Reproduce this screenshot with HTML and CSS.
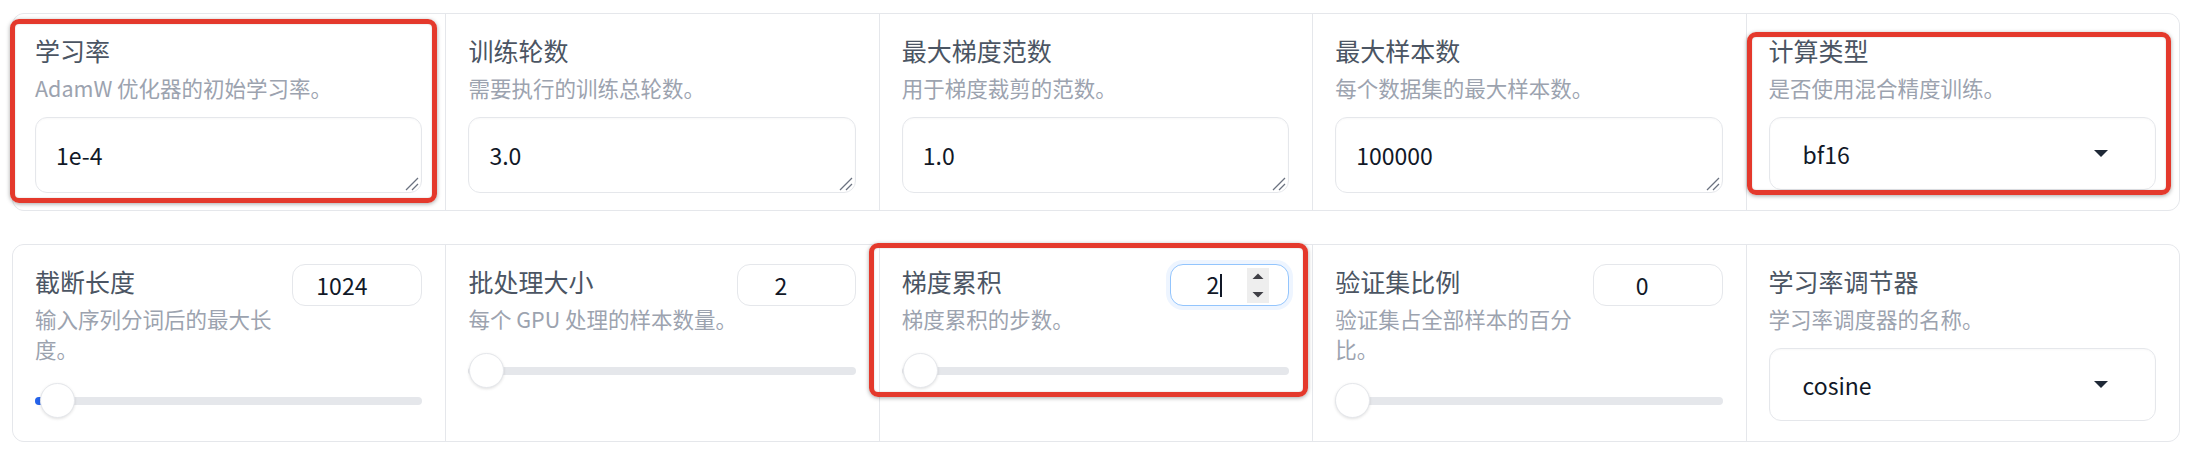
FILE: index.html
```html
<!DOCTYPE html>
<html lang="zh-CN">
<head>
<meta charset="utf-8">
<title>训练参数</title>
<link rel="stylesheet" href="styles.css">
</head>
<body>
<div class="page">
  <section class="panel">
    <div class="cell">
      <div class="label">学习率</div>
      <div class="info">AdamW 优化器的初始学习率。</div>
      <div class="textbox"><span>1e-4</span><svg class="grip" viewBox="0 0 16 16"><path d="M15 3 L3 15 M15 9 L9 15"/></svg></div>
    </div>
    <div class="cell">
      <div class="label">训练轮数</div>
      <div class="info">需要执行的训练总轮数。</div>
      <div class="textbox"><span>3.0</span><svg class="grip" viewBox="0 0 16 16"><path d="M15 3 L3 15 M15 9 L9 15"/></svg></div>
    </div>
    <div class="cell">
      <div class="label">最大梯度范数</div>
      <div class="info">用于梯度裁剪的范数。</div>
      <div class="textbox"><span>1.0</span><svg class="grip" viewBox="0 0 16 16"><path d="M15 3 L3 15 M15 9 L9 15"/></svg></div>
    </div>
    <div class="cell">
      <div class="label">最大样本数</div>
      <div class="info">每个数据集的最大样本数。</div>
      <div class="textbox"><span>100000</span><svg class="grip" viewBox="0 0 16 16"><path d="M15 3 L3 15 M15 9 L9 15"/></svg></div>
    </div>
    <div class="cell">
      <div class="label">计算类型</div>
      <div class="info">是否使用混合精度训练。</div>
      <div class="select"><span>bf16</span><svg class="arrow" viewBox="0 0 14 7"><polygon points="0,0 14,0 7,7"/></svg></div>
    </div>
  </section>

  <section class="panel">
    <div class="cell">
      <div class="head">
        <div class="meta">
          <div class="label">截断长度</div>
          <div class="info">输入序列分词后的最大长度。</div>
        </div>
        <div class="num"><span class="val">1024</span><span class="spin"></span></div>
      </div>
      <div class="slider"><div class="track"><div class="fill" style="width:22px"></div></div><div class="thumb" style="left:5px"></div></div>
    </div>
    <div class="cell">
      <div class="head">
        <div class="meta">
          <div class="label">批处理大小</div>
          <div class="info nowrap">每个 GPU 处理的样本数量。</div>
        </div>
        <div class="num narrow"><span class="val">2</span><span class="spin"></span></div>
      </div>
      <div class="slider"><div class="track"></div><div class="thumb" style="left:1px"></div></div>
    </div>
    <div class="cell">
      <div class="head">
        <div class="meta">
          <div class="label">梯度累积</div>
          <div class="info">梯度累积的步数。</div>
        </div>
        <div class="num narrow focus"><span class="val">2<span class="caret"></span></span><span class="spin"><svg viewBox="0 0 22 35"><polygon points="5.5,11 16.5,11 11,5.5"/><polygon points="5.5,24 16.5,24 11,29.5"/></svg></span></div>
      </div>
      <div class="slider"><div class="track"></div><div class="thumb" style="left:1px"></div></div>
    </div>
    <div class="cell">
      <div class="head">
        <div class="meta">
          <div class="label">验证集比例</div>
          <div class="info">验证集占全部样本的百分比。</div>
        </div>
        <div class="num"><span class="val">0</span><span class="spin"></span></div>
      </div>
      <div class="slider"><div class="track"></div><div class="thumb" style="left:0px"></div></div>
    </div>
    <div class="cell">
      <div class="label">学习率调节器</div>
      <div class="info">学习率调度器的名称。</div>
      <div class="select"><span>cosine</span><svg class="arrow" viewBox="0 0 14 7"><polygon points="0,0 14,0 7,7"/></svg></div>
    </div>
  </section>

  <div class="mark mark-1"></div>
  <div class="mark mark-2"></div>
  <div class="mark mark-3"></div>
</div>
</body>
</html>
```

FILE: styles.css
```css
html, body {
  margin: 0;
  background: #ffffff;
}

body {
  font-family: "Noto Sans CJK SC", "Noto Sans", sans-serif;
  color: #111827;
}

.page {
  position: relative;
  padding: 13px 22px 10px 12px;
  display: flex;
  flex-direction: column;
  gap: 33px;
}

.panel {
  display: grid;
  grid-template-columns: repeat(5, 1fr);
  gap: 1px;
  background: #e5e7eb;
  border: 1px solid #e5e7eb;
  border-radius: 12px;
  overflow: hidden;
}

.cell {
  background: #ffffff;
  padding: 19px 23px 17px 22px;
  min-width: 0;
}

.panel + .panel .cell {
  padding-bottom: 20px;
}

.label {
  font-size: 25px;
  line-height: 35px;
  color: #4b5563;
}

.info {
  margin-top: 5px;
  font-size: 21.5px;
  line-height: 30px;
  color: #9ca3af;
}

.nowrap {
  white-space: nowrap;
}

.textbox,
.select {
  position: relative;
  box-sizing: border-box;
  margin-top: 14px;
  display: flex;
  align-items: center;
  border: 1px solid #e5e7eb;
  border-radius: 12px;
  background: #ffffff;
  font-size: 23px;
  color: #111827;
  box-shadow: inset 0 1px 2px rgba(0, 0, 0, 0.03);
}

.textbox {
  height: 76px;
  padding: 0 20px;
}

.select {
  height: 73px;
  padding: 0 47px 0 33px;
  justify-content: space-between;
}

.grip {
  position: absolute;
  right: 2px;
  bottom: 1px;
  width: 16px;
  height: 16px;
  fill: none;
  stroke: #6b7280;
  stroke-width: 1.3;
}

.arrow {
  width: 14px;
  height: 7px;
  fill: #1f2937;
}

.head {
  display: flex;
  align-items: flex-start;
  gap: 10px;
}

.meta {
  flex: 1;
  min-width: 0;
}

.num {
  flex: none;
  box-sizing: border-box;
  width: 130px;
  height: 42px;
  display: flex;
  align-items: center;
  padding: 0 19px 0 10px;
  border: 1px solid #e5e7eb;
  border-radius: 13px;
  background: #ffffff;
  font-size: 23px;
  color: #111827;
}

.num.narrow {
  width: 119px;
}

.num .val {
  flex: 1;
  text-align: center;
  line-height: 1;
}

.num .spin {
  width: 22px;
  height: 35px;
  visibility: hidden;
}

.num.focus {
  border-color: #93c5fd;
  box-shadow: 0 0 0 4px #eef5ff;
}

.num.focus .spin {
  visibility: visible;
  background: #eeeeee;
}

.num .spin svg {
  display: block;
  width: 22px;
  height: 35px;
  fill: #3f3f46;
}

.caret {
  display: inline-block;
  width: 1.5px;
  height: 23px;
  margin-left: 1px;
  vertical-align: -3px;
  background: #111827;
}

.slider {
  position: relative;
  margin-top: 19px;
  height: 36px;
}

.track {
  position: absolute;
  left: 0;
  right: 0;
  top: 14px;
  height: 8px;
  border-radius: 4px;
  background: #e5e7eb;
  overflow: hidden;
}

.fill {
  position: absolute;
  left: 0;
  top: 0;
  bottom: 0;
  background: #2563eb;
}

.thumb {
  position: absolute;
  top: 0;
  box-sizing: border-box;
  width: 35px;
  height: 35px;
  border-radius: 50%;
  background: #ffffff;
  border: 1px solid #e5e7eb;
  box-shadow: 0 1px 3px rgba(0, 0, 0, 0.12);
}

.mark {
  position: absolute;
  box-sizing: border-box;
  border: 5px solid #e4392c;
  border-radius: 9px;
  box-shadow: 0 1px 4px rgba(0, 0, 0, 0.35), inset 0 0 2px rgba(0, 0, 0, 0.2);
}

.mark-1 {
  left: 10px;
  top: 19px;
  width: 427px;
  height: 184px;
}

.mark-2 {
  left: 1747px;
  top: 32px;
  width: 424px;
  height: 163px;
}

.mark-3 {
  left: 869px;
  top: 243px;
  width: 439px;
  height: 154px;
}
```
